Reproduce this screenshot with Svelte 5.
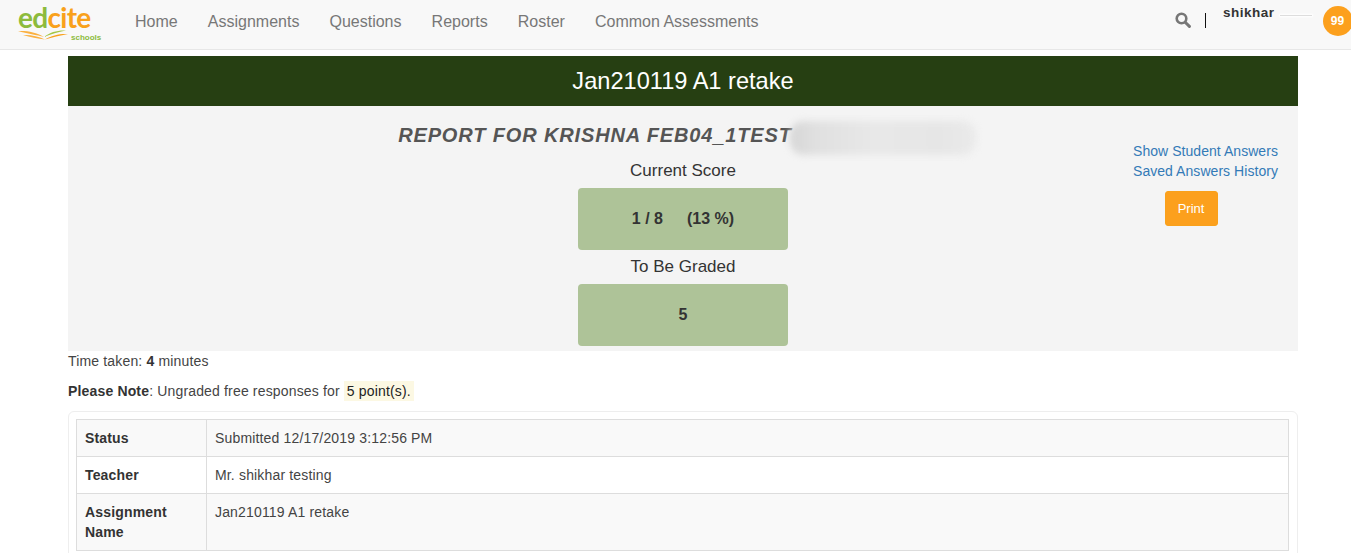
<script>
	const navItems = ['Home', 'Assignments', 'Questions', 'Reports', 'Roster', 'Common Assessments'];
	const rows = [
		{ label: 'Status', value: 'Submitted 12/17/2019 3:12:56 PM' },
		{ label: 'Teacher', value: 'Mr. shikhar testing' },
		{ label: 'Assignment Name', value: 'Jan210119 A1 retake' }
	];
</script>

<div class="page">
	<nav class="navbar">
		<div class="brand">
			<div class="logo-word"><span class="green">ed</span><span class="orange">cite</span></div>
			<svg class="book" width="54" height="10" viewBox="0 0 54 10" aria-hidden="true">
				<path d="M0 1C9 0.5 18 2 26 7C19 5 9 3.5 0 1Z" fill="#fbb040" />
				<path d="M5 5C12 4.5 20 6 27 9.5C20 8.5 12 7.5 5 5Z" fill="#fbb040" />
				<path d="M26 7C32 2 40 0 48 0.5C40 2 33 4 26 7Z" fill="#a3c644" />
				<path d="M27 9.5C33 5.5 42 3.5 50 4C42 5.5 34 7.5 27 9.5Z" fill="#f9a11b" />
			</svg>
			<span class="schools">schools</span>
		</div>
		<ul class="nav-links">
			{#each navItems as item}
				<li>{item}</li>
			{/each}
		</ul>
		<div class="nav-right">
			<svg class="search" width="16" height="16" viewBox="0 0 16 16" aria-hidden="true">
				<circle cx="6.5" cy="6.5" r="4.8" fill="none" stroke="#777" stroke-width="2.6" />
				<path d="M10.2 10.2L14.4 14.4" stroke="#777" stroke-width="3" stroke-linecap="round" />
			</svg>
			<span class="divider"></span>
			<span class="username">shikhar</span>
			<span class="smudge"></span>
			<span class="badge">99</span>
		</div>
	</nav>

	<main class="container">
		<h1 class="banner">Jan210119 A1 retake</h1>
		<section class="panel">
			<div class="report-col">
				<h2 class="report-title">REPORT FOR KRISHNA FEB04_1TEST</h2>
				<div class="score-label">Current Score</div>
				<div class="score-box"><span>1 / 8</span><span>(13 %)</span></div>
				<div class="score-label">To Be Graded</div>
				<div class="score-box"><span>5</span></div>
			</div>
			<div class="side-links">
				<a href="#answers">Show Student Answers</a>
				<a href="#history">Saved Answers History</a>
				<button class="print">Print</button>
			</div>
			<div class="blur-mask"></div>
		</section>

		<p class="time">Time taken: <strong>4</strong> minutes</p>
		<p class="note"><strong>Please Note</strong>: Ungraded free responses for <mark>5 point(s).</mark></p>

		<div class="table-card">
			<table>
				<tbody>
					{#each rows as row}
						<tr>
							<th>{row.label}</th>
							<td>{row.value}</td>
						</tr>
					{/each}
				</tbody>
			</table>
		</div>
	</main>
</div>

<style>
	:global(html), :global(body) {
		margin: 0;
		height: 100%;
		overflow: hidden;
		background: #fff;
	}

	.page {
		font-family: 'Liberation Sans', Arial, sans-serif;
		font-size: 14px;
		line-height: 20px;
		color: #333;
		height: 553px;
		overflow: hidden;
	}

	.navbar {
		display: flex;
		align-items: flex-start;
		height: 49px;
		background: #f8f8f8;
		border-bottom: 1px solid #e7e7e7;
	}

	.brand {
		position: relative;
		width: 120px;
		height: 49px;
		flex: none;
	}

	.logo-word {
		position: absolute;
		left: 18px;
		top: 0;
		font-family: Lato, sans-serif;
		font-size: 28px;
		font-weight: 700;
		line-height: 34px;
		letter-spacing: -0.7px;
	}

	.green {
		color: #8dbb3c;
	}

	.orange {
		color: #f9a11b;
	}

	.book {
		position: absolute;
		left: 18px;
		top: 30px;
	}

	.schools {
		position: absolute;
		left: 71px;
		top: 33px;
		font-size: 8px;
		font-weight: 700;
		line-height: 9px;
		color: #8dbb3c;
	}

	.nav-links {
		display: flex;
		gap: 30.1px;
		list-style: none;
		margin: 0 0 0 15px;
		padding: 0;
		font-size: 16px;
		line-height: 43px;
		color: #777;
	}

	.nav-right {
		position: relative;
		display: flex;
		align-items: flex-start;
		margin-left: auto;
		width: 176px;
		height: 49px;
		flex: none;
	}

	.search {
		margin: 12px 0 0 0;
		flex: none;
	}

	.divider {
		width: 1px;
		height: 15px;
		background: #111;
		margin: 13px 0 0 14px;
		flex: none;
	}

	.username {
		margin: 3px 0 0 17px;
		font-size: 13.5px;
		font-weight: 700;
		letter-spacing: 0.5px;
	}

	.smudge {
		width: 32px;
		height: 1px;
		margin: 15px 0 0 5px;
		background: #ddd;
		box-shadow: 0 0 2px 1px #fff;
		flex: none;
	}

	.badge {
		margin: 6px 0 0 11px;
		width: 30px;
		height: 30px;
		border-radius: 50%;
		background: #fca01d;
		color: #fff;
		font-size: 12px;
		font-weight: 700;
		line-height: 30px;
		text-align: center;
		flex: none;
	}

	.container {
		width: 1230px;
		margin: 6px 0 0 68px;
	}

	.banner {
		margin: 0;
		height: 50px;
		background: #263f12;
		color: #fff;
		font-size: 23.6px;
		font-weight: 400;
		line-height: 50px;
		text-align: center;
	}

	.panel {
		position: relative;
		display: flex;
		height: 245px;
		background: #f4f4f4;
	}

	.report-col {
		display: flex;
		flex-direction: column;
		align-items: center;
		width: 1230px;
		flex: none;
	}

	.report-title {
		margin: 18px 0 0;
		font-size: 20px;
		font-style: italic;
		font-weight: 700;
		line-height: 22px;
		letter-spacing: 0.86px;
		color: #555;
		transform: translateX(-88px);
		white-space: nowrap;
	}

	.score-label {
		margin-top: 5px;
		font-size: 17px;
		line-height: 24px;
	}

	.report-title + .score-label {
		margin-top: 13px;
	}

	.score-box {
		display: flex;
		justify-content: center;
		gap: 24px;
		width: 210px;
		height: 62px;
		margin-top: 5px;
		background: #aec398;
		border-radius: 4px;
		font-size: 16px;
		font-weight: 700;
		line-height: 62px;
	}

	.side-links {
		position: absolute;
		top: 35px;
		right: 20px;
		display: flex;
		flex-direction: column;
		align-items: center;
	}

	.side-links a {
		color: #337ab7;
		text-decoration: none;
		font-size: 14px;
		letter-spacing: 0.05px;
	}

	.print {
		margin: 10px 29px 0 0;
		width: 53px;
		height: 35px;
		padding: 0;
		border: 1px solid #f9a11b;
		border-radius: 3px;
		background: #fca01d;
		color: #fff;
		font: 13px 'Liberation Sans', Arial, sans-serif;
	}

	.blur-mask {
		position: absolute;
		left: 722px;
		top: 15px;
		width: 186px;
		height: 34px;
		border-radius: 14px;
		background: linear-gradient(90deg, #d6d6d6, #e0e0e0 14%, #e8e8e8 45%, #e6e6e6 80%, #eaeaea);
		filter: blur(3.5px);
	}

	.time {
		margin: 0;
		height: 30px;
		color: #444;
		letter-spacing: 0.16px;
	}

	.note {
		margin: 0;
		height: 30px;
		color: #444;
		letter-spacing: 0.16px;
	}

	.time strong, .note strong {
		color: #333;
	}

	mark {
		background: #fcf8e3;
		color: #222;
		padding: 2px 3px;
	}

	.table-card {
		border: 1px solid #eee;
		border-radius: 6px;
		padding: 7px 8px 0 7px;
		height: 200px;
		box-sizing: border-box;
	}

	table {
		width: 1213px;
		border-collapse: collapse;
		letter-spacing: 0.16px;
	}

	th, td {
		border: 1px solid #ddd;
		padding: 8px;
		text-align: left;
		vertical-align: top;
		line-height: 20px;
	}

	th {
		width: 113px;
		font-weight: 700;
	}

	td {
		color: #444;
	}

	tr:nth-child(odd) th,
	tr:nth-child(odd) td {
		background: #f9f9f9;
	}

	tr:last-child td, tr:last-child th {
		height: 40px;
	}
</style>
